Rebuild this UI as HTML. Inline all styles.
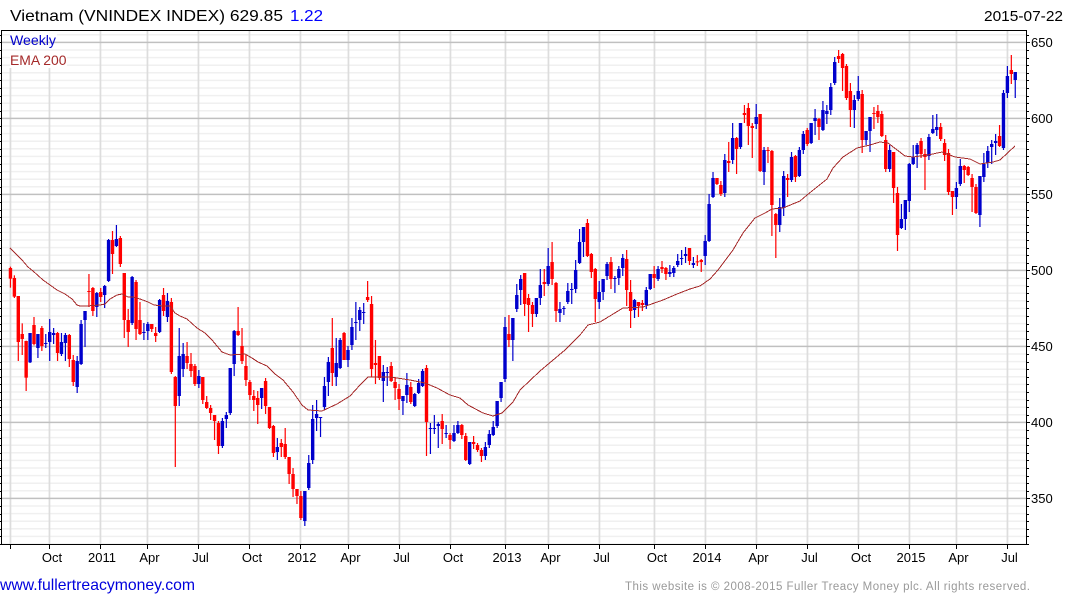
<!DOCTYPE html>
<html>
<head>
<meta charset="utf-8">
<title>Vietnam (VNINDEX INDEX)</title>
<style>
html,body{margin:0;padding:0;background:#fff;width:1075px;height:600px;overflow:hidden}
svg{display:block;position:absolute;left:0;top:0}
text{font-family:"Liberation Sans",Arial,sans-serif}
.ax{font-size:13px;fill:#000;text-anchor:middle}
.ay{font-size:13px;fill:#000}
</style>
</head>
<body>
<svg id="c" xmlns="http://www.w3.org/2000/svg" width="1075" height="600" viewBox="0 0 1075 600">
<g id="grid"></g>
<rect x="10" y="33" width="47" height="8.5" fill="#fff"></rect>
<rect x="10" y="43.5" width="47" height="5" fill="#fff"></rect>
<rect x="10" y="52" width="57" height="16" fill="#fff"></rect>
<g id="candles"></g>
<polyline id="ema" fill="none" stroke="#a52a2a" stroke-width="1" shape-rendering="crispEdges" points=""></polyline>
<g id="frame" shape-rendering="crispEdges"></g>

<text x="10" y="21" font-size="16" fill="#000" textLength="273" lengthAdjust="spacingAndGlyphs">Vietnam (VNINDEX INDEX) 629.85</text>
<text x="290" y="21" font-size="16" fill="#0000ff" textLength="33" lengthAdjust="spacingAndGlyphs">1.22</text>
<text x="984" y="21" font-size="15" fill="#000" textLength="79" lengthAdjust="spacingAndGlyphs">2015-07-22</text>
<text x="10" y="45" font-size="14" fill="#0000cc" textLength="46" lengthAdjust="spacingAndGlyphs">Weekly</text>
<text x="10" y="65" font-size="14" fill="#a52a2a" textLength="56.5" lengthAdjust="spacingAndGlyphs">EMA 200</text>

<text class="ay" x="1031" y="47">650</text>
<text class="ay" x="1031" y="123">600</text>
<text class="ay" x="1031" y="199">550</text>
<text class="ay" x="1031" y="275">500</text>
<text class="ay" x="1031" y="351">450</text>
<text class="ay" x="1031" y="427">400</text>
<text class="ay" x="1031" y="503">350</text>

<text class="ax" x="52" y="562">Oct</text>
<text class="ax" x="102" y="562">2011</text>
<text class="ax" x="149.5" y="562">Apr</text>
<text class="ax" x="200.5" y="562">Jul</text>
<text class="ax" x="252" y="562">Oct</text>
<text class="ax" x="302" y="562">2012</text>
<text class="ax" x="350.5" y="562">Apr</text>
<text class="ax" x="401.5" y="562">Jul</text>
<text class="ax" x="453" y="562">Oct</text>
<text class="ax" x="507" y="562">2013</text>
<text class="ax" x="550.5" y="562">Apr</text>
<text class="ax" x="601.5" y="562">Jul</text>
<text class="ax" x="657" y="562">Oct</text>
<text class="ax" x="707" y="562">2014</text>
<text class="ax" x="758.5" y="562">Apr</text>
<text class="ax" x="809.5" y="562">Jul</text>
<text class="ax" x="861" y="562">Oct</text>
<text class="ax" x="911" y="562">2015</text>
<text class="ax" x="958.5" y="562">Apr</text>
<text class="ax" x="1009.5" y="562">Jul</text>

<text x="0" y="590" font-size="15.6" fill="#0000dd" textLength="195" lengthAdjust="spacingAndGlyphs">www.fullertreacymoney.com</text>
<text x="625" y="590" font-size="11.5" fill="#999999" textLength="405" lengthAdjust="spacing">This website is © 2008-2015 Fuller Treacy Money plc. All rights reserved.</text>
</svg>
<script>
(function(){
var NS="http://www.w3.org/2000/svg";
function R(p,x,y,w,h,f){var r=document.createElementNS(NS,"rect");r.setAttribute("x",x);r.setAttribute("y",y);r.setAttribute("width",w);r.setAttribute("height",h);r.setAttribute("fill",f);p.appendChild(r);}
var g=document.getElementById("grid"),fr=document.getElementById("frame"),cd=document.getElementById("candles");
var v,y;
/* horizontal grid */
for(v=655;v>=320;v-=5){
  y=42.4+(650-v)*1.52;
  var maj=(v%50===0);
  if(!maj)R(g,2,y-0.75,1024,1.5,"#f0f0f0");
  R(fr,0,Math.round(y),1,1,"#000");
  R(fr,1027,Math.round(y),maj?3:2,1,"#000");
}
/* vertical grid */
[10,49,100,147,198,249,300,348,399,450,505,548,599,654,705,756,807,858,909,956,1007].forEach(function(x){
  var top=(x<60)?68:31;
  R(g,x-0.4,top,1.7,513+31-top,"#dddddd");
  R(fr,x,545,1,4,"#000");
});
for(v=650;v>=350;v-=50){
  y=42.4+(650-v)*1.52;
  R(g,2,y-0.75,1024,1.5,"#c0c0c0");
}
/* frame */
R(fr,1,30,1026,1,"#000");
R(fr,1,544,1026,1,"#000");
R(fr,1,30,1,515,"#000");
R(fr,1026,30,1,515,"#000");

/* candles: colour high,top,bottom,low */
var segs=[
[200,3,"r200,204,236,263 r226,234,290,294 r288,288,426,483 r370,402,417,465 r422,423,533,573 b399,399,487,489 r351,375,432,436 b402,402,444,474 r378,384,438,453 b402,429,432,444 b357,396,426,483 b384,399,405,432 r396,399,459,483 b399,426,462,468 b399,405,429,483 r402,405,477,501 r465,480,546,558 b468,483,561,579 b360,372,492,495 b333,333,360,441 r222,273,276,321 r261,264,333,348 b276,279,321,351 r264,276,291,306 b255,258,285,324 b117,120,243,246 r93,120,162,222 b75,117,138,141 r108,114,192,201 r219,219,360,414 r327,360,396,441 b228,231,369,375 r240,246,387,420 r306,360,402,405 b369,396,399,420 b366,372,393,420 r372,372,387,396 r381,399,408,426 b297,300,396,399 r264,285,333,348 b279,303,351,366 r294,306,516,522"],
[0,1,"r376,377,406,467 b328,356,396,406 b343,354,369,377 r342,356,363,369 r353,364,371,377 r364,366,384,386"],
[280,3,"b270,288,312,324 r291,291,360,372 r348,366,384,387 r375,384,399,420 r405,405,423,480 r423,429,498,522 b414,423,498,504 b396,405,417,444 b264,264,399,405 b150,153,252,288 r81,153,165,168 r144,198,243,252 r222,258,300,318 r300,306,345,360 r330,348,360,393 r333,354,375,432 b324,324,354,387 r294,303,378,402 r381,381,444,447 r435,438,519,531 b474,501,516,540 r477,489,501,531 r444,492,531,537 r531,531,582,612 r564,582,627,651 r627,627,648,672 r633,648,714,720 b633,633,723,738 b525,549,624,630 b375,417,540,552 b360,402,414,453 b411,411,414,471 b291,318,381,390 b231,246,306,348 r114,204,279,318 b174,249,291,318 b174,180,264,267 r156,159,240,240 b198,210,240,261 b114,141,195,210 b66,126,129,180 b81,90,120,153"],
[270,3,"b99,126,129,162 r33,81,90,96 r78,102,297,321 r210,279,285,342 r258,258,324,330 b285,306,333,396 b291,306,309,348 r276,288,333,336 r321,336,354,390 r342,357,387,420 b378,378,393,435 b309,345,375,399 r336,351,396,402 b369,372,408,411 b327,339,369,372 b297,303,348,351 r285,294,456,558 b459,474,477,552 b435,474,476,492 b456,462,468,534 r432,453,477,522 b465,489,492,504 r489,495,510,537 b465,489,513,516 b453,465,489,492 r462,465,495,507 r489,498,570,573 b516,516,582,585 r498,516,522,537 r519,525,540,546 r534,540,558,576 b516,531,558,570 b480,492,525,534 b453,471,495,498 b393,393,468,474 b336,336,384,396 b141,171,327,336 r135,192,210,231 b144,144,210,273 b42,75,117,126 b15,27,60,105 r9,9,102,138 r72,84,105,186 r96,105,132,171 b84,84,132,141"],
[200,3,"b207,255,294,315 r207,246,252,288 b144,198,252,258 r126,186,237,255 r246,249,333,366 b306,327,339,366 b318,324,327,345 b249,273,306,312 b249,267,270,312 b180,210,267,279 b87,126,189,192 b81,81,126,171 r57,69,168,171 r159,162,216,234 r204,207,297,366 b243,276,306,327 b237,237,276,300 b186,192,228,240 r171,186,237,267 b228,234,237,279 b198,207,234,255 b162,174,204,228 r150,177,270,318 r240,276,333,384 b297,300,330,354 r306,306,318,351 r300,309,315,333 b261,270,315,327 b222,222,267,270 r198,222,234,264 b198,207,237,243 r183,201,207,219 r201,204,222,240 b195,216,222,231 b198,204,219,231 b162,183,195,201 b150,174,177,195 b141,162,168,189 r144,144,183,195 b171,189,195,204 r165,184,186,198 r177,180,186,216"],
[90,3,"b435,453,498,525 b312,342,453,456 b246,264,321,324 r264,264,282,285 r273,285,312,318 b192,210,309,321 r156,213,219,246 b99,144,210,222 r141,144,177,252 b99,99,171,177 r45,69,75,99 r39,54,108,165 r99,108,114,204 b42,81,102,117 r72,72,243,246 b171,180,246,285 r171,180,183,219 r180,183,345,438 r369,372,405,504 b324,351,405,426 b243,258,354,378 r252,264,270,321 b186,201,270,276 r195,198,261,276 b171,180,258,261 b123,132,180,192 r114,120,162,168 b99,99,159,162 b57,84,93,135 r84,87,111,150 b33,60,120,123 b45,63,72,102"],
[0,1,"b83,87,110,115 b57,62,83,85 r50,56,59,63 r53,54,68,91 r64,66,98,100 r83,91,110,127 b95,100,110,128 b76,91,99,101 r90,94,140,153 b131,131,140,145 b117,117,131,152 r107,113,114,129 r105,111,117,123 r111,114,136,137"],
[30,3,"r315,330,417,426 b345,360,417,426 r366,366,474,519 r471,489,615,663 b522,567,594,597 b510,510,567,600 b399,402,513,546 b345,381,402,405 b339,345,372,414 r324,333,372,384 r357,372,381,480 b312,321,378,390 b255,297,309,312 b252,291,300,318 r279,291,327,333 r327,339,375,393 r357,369,486,495 r483,483,501,555 b456,474,501,537 b387,408,462,468 r405,408,420,459 r408,411,435,438 r432,444,471,546 r462,471,549,552 b438,438,555,591 b369,402,441,456 b348,363,399,414 b330,342,351,402 b312,333,339,375 r285,318,348,351 b180,189,354,360 b108,138,189,204 r75,120,132,162 b126,126,150,204"]
];
var i=0;
segs.forEach(function(s){
  var off=s[0],sc=s[1];
  s[2].split(" ").forEach(function(t){
    var col=t.charAt(0)==="r"?"#ff0000":"#0000cc";
    var a=t.slice(1).split(",").map(function(n){return off+(+n)/sc;});
    var cx=10.45+3.925*i;
    R(cd,cx-0.6,a[0],1.2,Math.max(1,a[3]-a[0]),col);
    R(cd,cx-1.7,a[1],3.4,Math.max(1,a[2]-a[1]),col);
    i++;
  });
});
/* EMA */
document.getElementById("ema").setAttribute("points","10,248 14,252 22,260 28,267 33,271 43,280 50,285 57,290 65,294 72,299 77,305 80,306 87,306 100,305 105,304 110,299 117,295 122,294 128,297 133,297 140,299 148,302 154,305 163,306 170,306 175,313 180,316 187,319 197,328 205,333 212,340 222,352 230,355 245,354 252,358 258,362 267,366 275,374 283,380 293,392 302,405 308,410 322,411 337,404 350,396 360,385 368,377 388,377 397,378 410,380 425,383 437,388 450,395 460,398 468,405 483,413 493,416 502,413 513,402 520,390 540,371 565,350 580,335 588,325 600,322 623,308 643,307 663,300 677,294 690,289 700,286 710,279 718,270 733,250 743,233 755,218 765,213 772,209 783,208 800,201 807,195 827,179 833,168 843,157 857,148 870,145 880,142 888,143 905,156 913,157 928,155 942,152 955,157 970,159 980,164 993,162 1000,160 1015,146");
})();
</script>
</body>
</html>
